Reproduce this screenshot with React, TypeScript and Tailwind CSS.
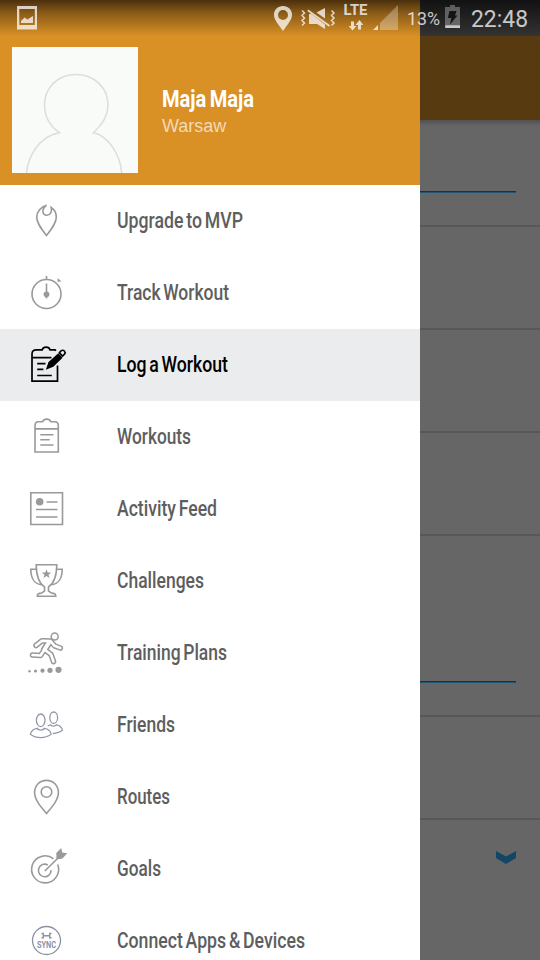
import type { ReactNode } from "react";

type Item = { label: string; width: number; icon: ReactNode; active?: boolean };

/* Icons share a 48x72 canvas aligned to the top-left of each row, offset by 22px. */
const items: Item[] = [
  {
    label: "Upgrade to MVP", width: 126,
    icon: (
      <path d="M24.500 20.200C18.500 22 14.700 27 14.700 32.200c0 5.800 4.600 11.500 9.800 18.300 5.200-6.800 9.800-12.500 9.800-18.300 0-4.200-1.900-7.700-5.100-9.700 1.200 4.200-.8 7.700-4.300 7.700-4.400 0-6-5.500-.4-10z" />
    ),
  },
  {
    label: "Track Workout", width: 112,
    icon: (
      <>
        <circle cx="24.500" cy="37" r="14.500" />
        <path d="M24.500 19v4M24.500 26.500v15" />
        <circle cx="24.500" cy="37.300" r="2.900" fill="currentColor" stroke="none" />
        <path d="M35.500 21l3.800 3.300-3.600.6z" fill="currentColor" stroke="none" />
      </>
    ),
  },
  {
    label: "Log a Workout", width: 111, active: true,
    icon: (
      <>
        <path d="M34 21.700l-1-.9h-5c-.6-1.900-2-2.700-3.900-2.700s-3.300.8-3.900 2.700h-5.800C11.500 20.800 10 22.200 10 25v27.200h25.500V36.500M10 28.700h19.500M15.200 34.700h8.300M15.200 40.300h6.200M15.200 46.500h14.600" strokeWidth="1.700" />
        <path d="M23.800 40.700l2.700-7.700 9.800-8.800 4.300 4.600-9.300 8.900z" fill="currentColor" stroke="none" />
        <path d="M37.300 23.600l2.100-1.900c1-.8 2.300-.5 3 .4.800.9.900 2.100.1 3l-2 2z" strokeWidth="1.600" strokeLinejoin="round" />
      </>
    ),
  },
  {
    label: "Workouts", width: 74,
    icon: (
      <path d="M13 51V25c0-2.700 1-4.200 3.300-4.200h4.300c.8-2 2.200-2.700 4.100-2.700s3.300.7 4.100 2.700h4c2.300 0 3.500 1.500 3.500 4.200v26zM13 27.900h23.300M18.300 33.700h13.200M18.300 38.800h9.500M18.300 44h13.200" />
    ),
  },
  {
    label: "Activity Feed", width: 100,
    icon: (
      <>
        <path d="M8.800 19.800h31.700v31.700H8.800zM24.500 29h11M14 36.500h21.500M14 44h21.500" />
        <circle cx="17.700" cy="28.700" r="3.800" fill="currentColor" stroke="none" />
      </>
    ),
  },
  {
    label: "Challenges", width: 87,
    icon: (
      <>
        <path d="M14.200 19.700h20.600c-.1 9.500-1.500 17.700-8.300 22.200v4.200l3.300 2c2.800 0 4 .8 4 3.200H15.300c0-2.400 1.200-3.200 4-3.200l3.200-2v-4.200c-6.800-4.500-8.200-12.700-8.300-22.200z" />
        <path d="M14.500 24.200H8.800c0 8 3.200 14.700 10.500 15.500M34.500 24.200h5.700c0 8-3.200 14.700-10.500 15.500" />
        <path d="M24.500 24.200l1.200 3.300h3.500l-2.700 2.200 1 3.400-3-2-3 2 1-3.400-2.700-2.200h3.500z" fill="currentColor" stroke="none" />
      </>
    ),
  },
  {
    label: "Training Plans", width: 110,
    icon: (
      <>
        <g strokeLinecap="round" strokeLinejoin="round">
          <path d="M14 28.500l6-4.800 8.500.3 4 4.800 5.800 2.200M27.500 25l-5.500 8M22.500 32.500l-4 6-8-.5M22.500 32.500l6.500 5 2.500 7" strokeWidth="5.600" />
          <path d="M27 25.500l-4.500 7" strokeWidth="7" />
          <path d="M14 28.500l6-4.800 8.500.3 4 4.800 5.800 2.200M27.500 25l-5.500 8M22.500 32.500l-4 6-8-.5M22.500 32.500l6.500 5 2.500 7" stroke="#fff" strokeWidth="2.600" />
          <path d="M27 25.500l-4.500 7" stroke="#fff" strokeWidth="4" />
        </g>
        <circle cx="32.700" cy="19.500" r="3.500" fill="#fff" strokeWidth="1.500" />
        <g fill="currentColor" stroke="none">
          <circle cx="7.500" cy="54.300" r="1.200" /><circle cx="13.500" cy="54" r="1.600" />
          <circle cx="20.500" cy="53.700" r="2.100" /><circle cx="28" cy="53.300" r="2.600" />
          <circle cx="36.500" cy="52.800" r="3.100" />
        </g>
      </>
    ),
  },
  {
    label: "Friends", width: 58,
    icon: (
      <g stroke="#9299a6" strokeWidth="1.300">
        <ellipse cx="18.700" cy="31.300" rx="4.300" ry="6.300" />
        <path d="M15.300 39.300c-4.200.5-6.300 3-6.900 6 5.900 4.500 14.500 4.500 20.800 0-.7-3.300-2.800-5.500-7-6-.7 2.300-6.200 2.300-6.900 0z" />
        <ellipse cx="31.700" cy="28.700" rx="3.900" ry="5.700" />
        <path d="M25.800 36.900c.8-.7 1.600-1 2.700-1.100.7 1.800 5.200 1.800 6 0 3.500.6 5.400 2.800 6 5.500-2.600 2-5.200 2.800-9.700 3.200" />
      </g>
    ),
  },
  {
    label: "Routes", width: 53,
    icon: (
      <>
        <path d="M24.500 52.500C18 44.800 12.600 38.500 12.600 31.600c0-7.300 5.300-12.200 11.900-12.200s11.900 4.900 11.900 12.200c0 6.900-5.400 13.200-11.900 20.900z" />
        <circle cx="24.500" cy="31" r="5.300" />
      </>
    ),
  },
  {
    label: "Goals", width: 44,
    icon: (
      <>
        <path d="M31.500 25.800A13.500 13.500 0 1 0 35.700 31.500M25.800 32A6.300 6.300 0 1 0 29 37.100M22.800 38l13-12.700" />
        <path d="M34.500 26.500l-.2-6.500 4.900-5 1 4.500 5 .8-4.700 5.200z" fill="currentColor" stroke="none" />
      </>
    ),
  },
  {
    label: "Connect Apps & Devices", width: 188,
    icon: (
      <g stroke="#8a93a3">
        <circle cx="24.500" cy="35.500" r="14" strokeWidth="1.300" />
        <path d="M19.500 28.500h1.800v4.300h-1.800M29.500 28.500h-1.800v4.300h1.800M21.500 30.700h6" strokeWidth="1.400" />
        <text x="15" y="42.500" textLength="19" lengthAdjust="spacingAndGlyphs" fill="#8a93a3" stroke="none" className="font-[Roboto] text-[9px] font-bold">SYNC</text>
      </g>
    ),
  },
];

/* Text squeezed horizontally so that it fills exactly the given width. */
function Condensed({ text, width, className }: { text: string; width: number; className: string }) {
  return (
    <svg className="block h-8 overflow-visible [word-spacing:-2px]" width={width} height={32}>
      <text x="0" y="23" textLength={width} lengthAdjust="spacingAndGlyphs" className={className}>{text}</text>
    </svg>
  );
}

function StatusBar() {
  return (
    <div className="absolute inset-x-0 top-0 h-9">
      <svg width="540" height="36" fill="#fff" className="opacity-75">
        <path fillRule="evenodd" d="M17 6h20v23.500H17zM19.300 9v16h15.500V9z" />
        <path d="M21 23v-2l3.500-3.500 3 2L33 16v7z" />
        <path fillRule="evenodd" d="M283 6c5.200 0 9 3.800 9 8.800 0 5.200-4.700 10.200-9 16.200-4.300-6-9-11-9-16.200C274 9.800 277.800 6 283 6zm0 4a5 5 0 1 0 0 10 5 5 0 0 0 0-10z" />
        <path d="M309 14h2.500L325 24.500V29l-8-5h-8zM316.500 12.500l8.500-4.500v10.500z" />
        <path d="M307.800 10.300L329.500 26" fill="none" stroke="#fff" strokeWidth="1.800" />
        <path d="M302 10.500l2.500 2.500-2.500 2.500 2.500 2.500-2.500 2.500 2.500 2.500-2.500 2.500M331.500 10.500l2.500 2.500-2.500 2.500 2.500 2.500-2.500 2.500 2.500 2.500-2.500 2.500" fill="none" stroke="#fff" strokeWidth="1.500" />
        <text x="343.500" y="15" textLength="24" lengthAdjust="spacingAndGlyphs" className="font-[Roboto] text-[14px] font-bold">LTE</text>
        <path d="M351 21.500h3V26h2.500l-4 4.500-3.800-4.500h2.300zM358 29.500h3V25h2.300l-3.800-5-4 5h2.500z" />
        <path d="M373 30l5-5v5z" />
        <path d="M380 30V23l18-18v25z" opacity=".4" />
        <text x="407" y="25" textLength="33" lengthAdjust="spacingAndGlyphs" className="font-[Roboto] text-[18px]">13%</text>
        <path d="M450 5h5v2h5v21h-15V7h5z" opacity=".4" />
        <path d="M445.300 25.300H460V28h-14.700z" />
        <path d="M449.500 11h7l-1.500 4.500h2.500l-7.500 9 1.300-6.500h-3.500z" fill="#111" />
        <text x="471" y="27" textLength="57" lengthAdjust="spacingAndGlyphs" className="font-[Roboto] text-[24px]">22:48</text>
      </svg>
    </div>
  );
}

export default function App() {
  return (
    <div className="relative flex h-[960px] w-[540px] overflow-hidden bg-[#666]">
      <aside className="flex w-[420px] shrink-0 flex-col bg-white">
        <header className="flex h-[185px] shrink-0 bg-[linear-gradient(#4a300c_0px,#8a5b18_13px,#d99025_36px)] pt-[47px] pl-3">
          <svg width="126" height="126" viewBox="0 0 126 126" className="shrink-0 bg-[#f9fbf8]">
            <path d="M14.500 126c1.500-17 13-37 33-40.300C35 77 32.500 67 32.500 58c0-17 13-30.500 31.500-30.500S96 41 96 58c0 11-6 20-14.500 27.700C97 89 108.500 109 109.700 126" fill="none" stroke="#dcdedb" strokeWidth="1.500" />
          </svg>
          <div className="ml-6 pt-[37px]">
            <Condensed text="Maja Maja" width={92} className="fill-white font-[Roboto] text-[23.500px] font-bold" />
            <div className="font-['Liberation_Sans',sans-serif] text-[18px] leading-5 text-[#f3dab7]">Warsaw</div>
          </div>
        </header>
        <nav>
          {items.map((item) => (
            <div key={item.label} className={item.active ? "flex h-[72px] items-center bg-[#ebecee] pl-[22px] text-black" : "flex h-[72px] items-center pl-[22px] text-[#999]"}>
              <svg width="48" height="72" fill="none" stroke="currentColor" strokeWidth="1.600" className="shrink-0 overflow-visible">{item.icon}</svg>
              <div className="ml-[47px]">
                <Condensed text={item.label} width={item.width} className={item.active ? "fill-black font-[Roboto] text-[21.500px] font-medium" : "fill-[#5e5e5e] font-[Roboto] text-[21.500px] font-medium"} />
              </div>
            </div>
          ))}
        </nav>
      </aside>
      <main className="flex w-[120px] shrink-0 flex-col">
        <div className="h-9 shrink-0 bg-linear-to-b from-[#121212] to-[#333]" />
        <div className="h-[84px] shrink-0 bg-[#573a10]" />
        <section className="h-[107px] shrink-0 border-b-2 border-[#575757] bg-[linear-gradient(#505050,#666_6px)] pt-[71px]">
          <div className="h-0.5 w-24 border-t border-[#0b3550] bg-[#245573]" />
        </section>
        <section className="h-[103px] shrink-0 border-b-2 border-[#575757]" />
        <section className="h-[103px] shrink-0 border-b-2 border-[#575757]" />
        <section className="h-[103px] shrink-0 border-b-2 border-[#575757]" />
        <section className="h-[181px] shrink-0 border-b-2 border-[#575757] pt-[145px]">
          <div className="h-0.5 w-24 border-t border-[#0b3550] bg-[#245573]" />
        </section>
        <section className="h-[103px] shrink-0 border-b-2 border-[#575757]" />
        <section className="pt-[31px] pl-[76px]">
          <svg width="20" height="14"><path d="M0 0l10 5.500L20 0v7L10 13 0 7z" fill="#134565" /></svg>
        </section>
      </main>
      <StatusBar />
    </div>
  );
}
